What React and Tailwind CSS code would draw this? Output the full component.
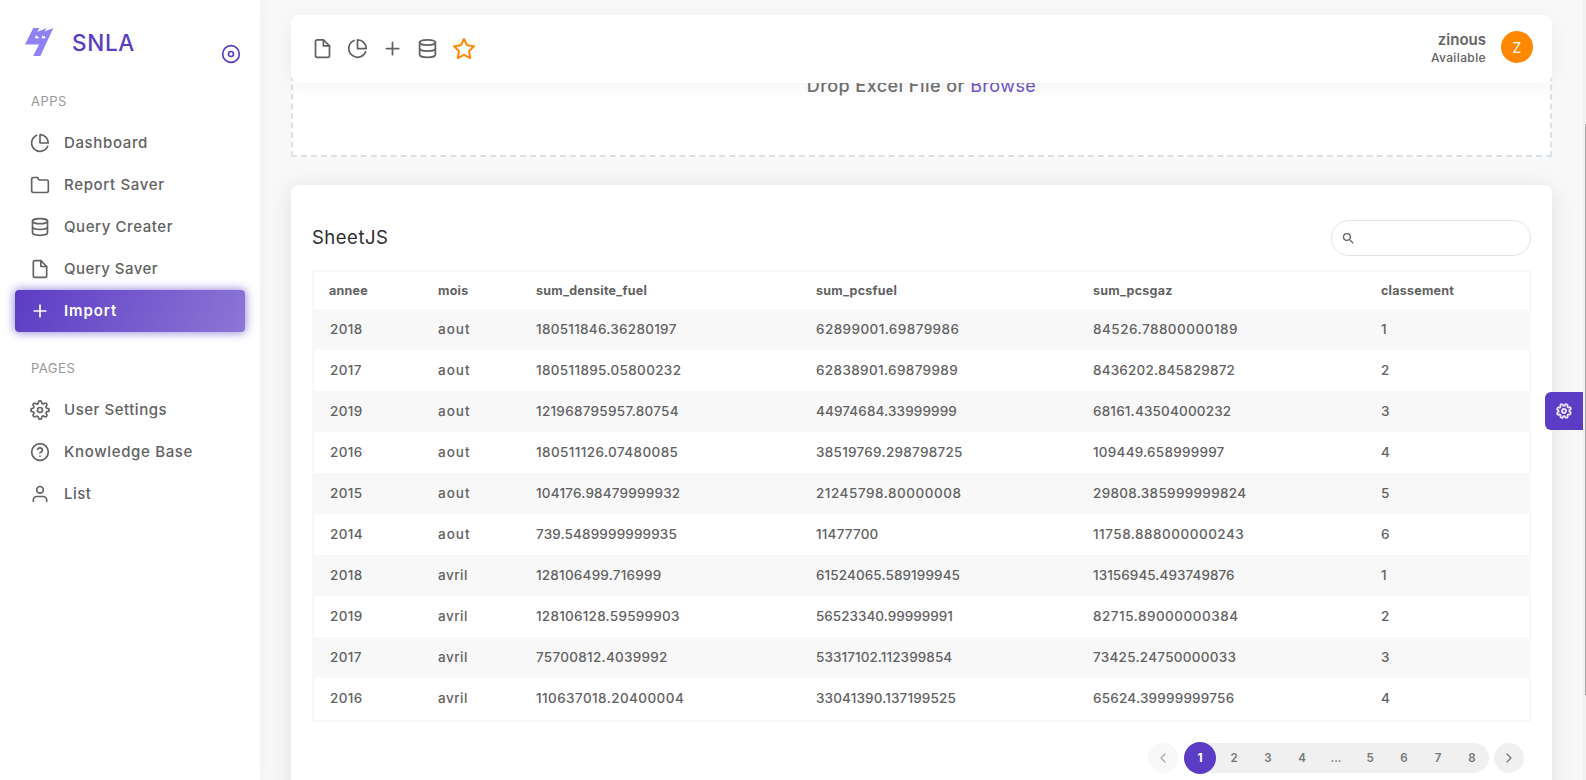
import { FiChevronLeft, FiChevronRight, FiDatabase, FiDisc, FiFile, FiFolder, FiHelpCircle, FiPieChart, FiPlus, FiSettings, FiStar, FiUser } from "react-icons/fi";
import { MdSearch } from "react-icons/md";

const apps = [
  { label: "Dashboard", Icon: FiPieChart, tracking: "tracking-[0.64px]" },
  { label: "Report Saver", Icon: FiFolder, tracking: "tracking-[0.66px]" },
  { label: "Query Creater", Icon: FiDatabase, tracking: "tracking-[0.58px]" },
  { label: "Query Saver", Icon: FiFile, tracking: "tracking-[0.46px]" },
  { label: "Import", Icon: FiPlus, active: true, tracking: "tracking-[0.9px]" },
];

const pages = [
  { label: "User Settings", Icon: FiSettings, tracking: "tracking-[0.53px]" },
  { label: "Knowledge Base", Icon: FiHelpCircle, tracking: "tracking-[0.66px]" },
  { label: "List", Icon: FiUser, tracking: "tracking-[0.5px]" },
];

const columns = ["annee", "mois", "sum_densite_fuel", "sum_pcsfuel", "sum_pcsgaz", "classement"];

const rows = [
  ["2018", "aout", "180511846.36280197", "62899001.69879986", "84526.78800000189", "1"],
  ["2017", "aout", "180511895.05800232", "62838901.69879989", "8436202.845829872", "2"],
  ["2019", "aout", "121968795957.80754", "44974684.33999999", "68161.43504000232", "3"],
  ["2016", "aout", "180511126.07480085", "38519769.298798725", "109449.658999997", "4"],
  ["2015", "aout", "104176.98479999932", "21245798.80000008", "29808.385999999824", "5"],
  ["2014", "aout", "739.5489999999935", "11477700", "11758.888000000243", "6"],
  ["2018", "avril", "128106499.716999", "61524065.589199945", "13156945.493749876", "1"],
  ["2019", "avril", "128106128.59599903", "56523340.99999991", "82715.89000000384", "2"],
  ["2017", "avril", "75700812.4039992", "53317102.112399854", "73425.24750000033", "3"],
  ["2016", "avril", "110637018.20400004", "33041390.137199525", "65624.39999999756", "4"],
];

// Letter spacing of the three long numeric columns, row by row
const numberTracking = [
  ["tracking-[0.28px]", "tracking-[0.42px]", "tracking-[0.49px]"],
  ["tracking-[0.34px]", "tracking-[0.36px]", "tracking-[0.18px]"],
  ["tracking-[0.28px]", "tracking-[0.12px]", "tracking-[0.18px]"],
  ["tracking-[0.4px]", "tracking-[0.28px]", "tracking-[0.24px]"],
  ["tracking-[0.2px]", "tracking-[0.53px]", "tracking-[0.31px]"],
  ["tracking-[0.14px]", "tracking-[0.19px]", "tracking-[0.5px]"],
  ["tracking-[0.22px]", "tracking-[0.1px]", "tracking-[0.06px]"],
  ["tracking-[0.25px]", "tracking-[0px]", "tracking-[0.5px]"],
  ["tracking-[0.28px]", "tracking-[0.08px]", "tracking-[0.27px]"],
  ["tracking-[0.42px]", "tracking-[0.14px]", "tracking-[0.21px]"],
];

const grid = "grid grid-cols-[109px_98px_280px_277px_288px_1fr] items-center pl-[15px]";

function cellTracking(row, col) {
  if (col === 0) return "pl-px tracking-[0.35px]";
  if (col === 1) return rows[row][1] === "aout" ? "tracking-[1px]" : "tracking-[0.5px]";
  if (col === 5) return "";
  return numberTracking[row][col - 2];
}

function Logo() {
  return (
    <svg viewBox="0 0 28.500 28" className="h-7 w-[28.500px]" fill="#8f82f7">
      <path d="M8.300 0H14.300L12.500 3.800L21.700 0L19.300 3.600L28.400 0L15.300 28H8.200L14 16.600H0z" />
      <path d="M9.800 10.300l1.300-3.300 1 1.900 .6-1.100 1.300 2.500zM16.500 10.300l1.300-3.300 1 1.900 .6-1.100 1.300 2.500z" fill="#fff" />
    </svg>
  );
}

function NavItem({ label, Icon, active, tracking }) {
  return (
    <a className={`flex h-[42px] items-center rounded-[4px] pl-[15px] text-[15px] ${tracking} ${active ? "bg-linear-118 from-[#5b3cc4] to-[#5b3cc4]/70 font-semibold text-white shadow-[0_0_10px_1px_rgba(91,60,196,0.6)]" : "font-medium text-[#626262]"}`}>
      <Icon className="mr-[14px] size-5" />
      {label}
    </a>
  );
}

function Sidebar() {
  return (
    <aside className="z-20 h-full w-[260px] shrink-0 bg-white px-[15px] shadow-[0_0_15px_0_rgba(0,0,0,0.05)]">
      <div className="flex h-[81px] items-center pl-[10px]">
        <div className="mt-[2px]"><Logo /></div>
        <span className="ml-[18.500px] mt-[5px] text-[22.500px] font-medium leading-none tracking-[0.7px] text-[#5b3cc4]">SNLA</span>
        <FiDisc className="ml-auto mr-1 mt-[27px] size-5 text-[#5b3cc4]" />
      </div>
      <div className="flex h-[41px] items-center pl-4 text-[13px] tracking-[0.5px] text-[#999]">APPS</div>
      {apps.map((item) => <NavItem key={item.label} {...item} />)}
      <div className="flex h-[57px] items-center pl-4 pt-4 text-[13px] tracking-[0.5px] text-[#999]">PAGES</div>
      {pages.map((item) => <NavItem key={item.label} {...item} />)}
    </aside>
  );
}

function Navbar() {
  return (
    <header className="relative z-10 flex h-[68px] shrink-0 items-center rounded-lg bg-white pl-[21px] pr-[19px] shadow-[0_4px_20px_0_rgba(0,0,0,0.05)]">
      <div className="mb-px flex items-center gap-[14px] text-[#626262]">
        <FiFile className="size-[21px]" />
        <FiPieChart className="size-[21px]" />
        <FiPlus className="size-[21px]" />
        <FiDatabase className="size-[21px]" />
        <FiStar className="size-6 text-[#ff8800]" />
      </div>
      <div className="mb-[2px] ml-auto mr-[15px] text-right text-[#626262]">
        <p className="text-[15px] font-semibold leading-[18px]">zinous</p>
        <p className="text-[12px] font-medium leading-[17px] tracking-[0.38px]">Available</p>
      </div>
      <div className="mb-1 flex size-8 items-center justify-center rounded-full bg-[#ff8800] text-[14px] text-white">Z</div>
    </header>
  );
}

function Pagination() {
  return (
    <div className="mr-[7px] mt-5 flex h-8 items-center justify-end text-[11.500px] font-semibold text-[#777]">
      <button className="mr-[6px] flex size-[30px] items-center justify-center rounded-full bg-[#f8f8f8] text-[#aaa]"><FiChevronLeft className="size-4" /></button>
      <div className="flex h-[30px] w-[305px] items-center rounded-full bg-[#f0f0f0]">
        <span className="mr-[1px] flex size-8 shrink-0 items-center justify-center rounded-full bg-[#5b3cc4] text-[12px] font-bold text-white">1</span>
        {["2", "3", "4", "...", "5", "6", "7", "8"].map((p) => <span key={p} className="w-[34px] pt-[2px] text-center">{p}</span>)}
      </div>
      <button className="ml-[5px] flex size-[30px] items-center justify-center rounded-full bg-[#f0f0f0]"><FiChevronRight className="size-4" /></button>
    </div>
  );
}

export default function App() {
  return (
    <div className="relative flex h-[780px] w-full overflow-hidden bg-[#f8f8f8] font-['Inter',sans-serif]">
      <Sidebar />
      <main className="flex min-w-0 flex-1 flex-col pl-[31px] pr-[31px] pt-[15px]">
        <Navbar />
        <section className="-mt-2 flex h-[82px] shrink-0 justify-center border-2 border-t-0 border-dashed border-[#dae1e7] bg-white text-[18px] font-medium leading-[22px] tracking-[0.45px] text-[#727272]">
          <p>Drop Excel File or <span className="font-normal text-[#6f54cc]">Browse</span></p>
        </section>
        <section className="mt-7 h-[640px] shrink-0 rounded-lg bg-white px-[21px] pt-[35px] shadow-[0_4px_25px_0_rgba(0,0,0,0.1)]">
          <div className="flex h-9 items-center justify-between">
            <h1 className="text-[18.500px] tracking-[0.5px] text-[#2c2c2c]">SheetJS</h1>
            <label className="flex h-9 w-[200px] items-center rounded-full border border-[#e2e2e2] pl-[9px] text-[#626262]">
              <MdSearch className="size-[15px]" />
            </label>
          </div>
          <div className="mt-[14px] border-2 border-[#f8f8f8] pb-px text-[#626262]">
            <div className={`${grid} h-[37px] pt-px text-[12.500px] font-bold tracking-[0.25px]`}>
              {columns.map((c) => <span key={c}>{c}</span>)}
            </div>
            {rows.map((row, i) => (
              <div key={i} className={`${grid} h-[41px] text-[13.500px] font-medium ${i % 2 === 0 ? "bg-[#f8f8f8]" : "bg-white"}`}>
                {row.map((cell, j) => <span key={j} className={cellTracking(i, j)}>{cell}</span>)}
              </div>
            ))}
          </div>
          <Pagination />
        </section>
      </main>
      <div className="w-[3px] shrink-0 bg-[#f1f1f1] pl-[2px] pt-[124px]">
        <div className="h-[571px] bg-[#a8a8a8]" />
      </div>
      <button className="absolute right-[3px] top-[392px] z-20 flex size-[38px] items-center justify-center rounded-l-md bg-[#5b3cc4] text-[#e9e4fa]">
        <FiSettings className="size-4 rotate-[22deg] stroke-[2.8]" />
      </button>
    </div>
  );
}
